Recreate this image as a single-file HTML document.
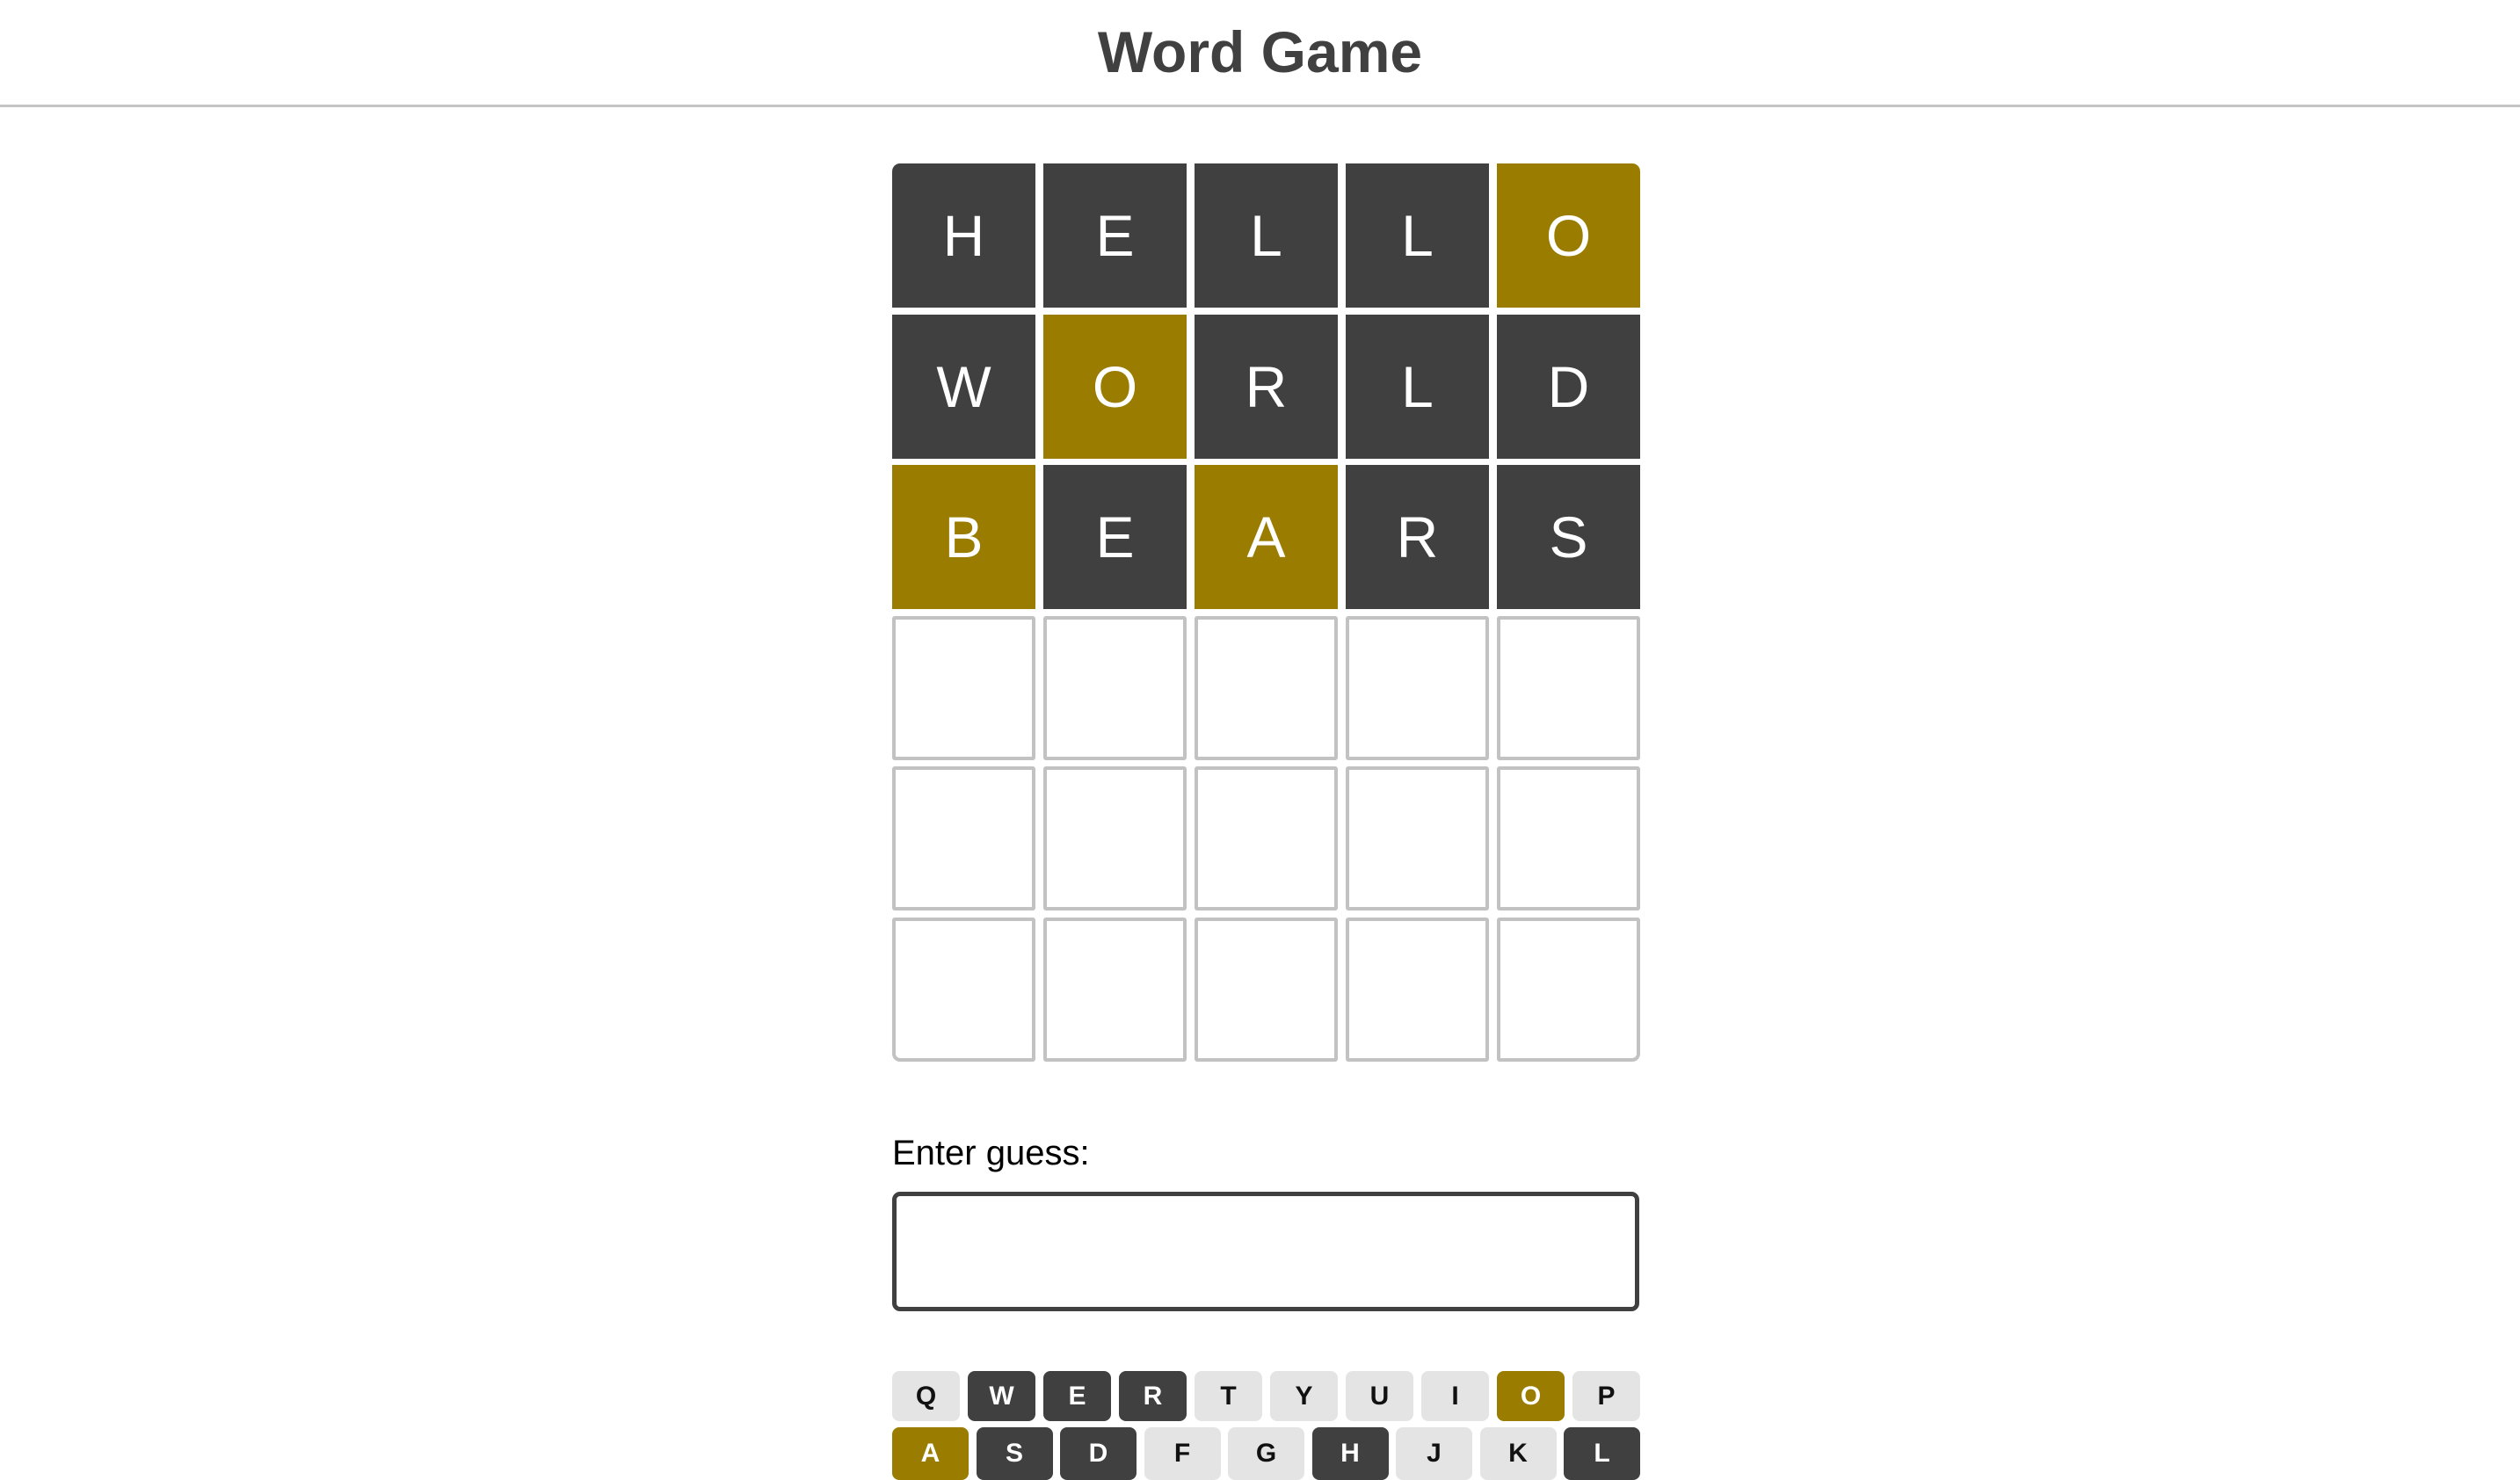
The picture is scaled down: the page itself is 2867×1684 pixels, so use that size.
<!DOCTYPE html>
<html><head><meta charset="utf-8"><style>
*{box-sizing:border-box;margin:0;padding:0}
body{width:2867px;height:1670px;overflow:hidden;background:#fff;font-family:"Liberation Sans",sans-serif;position:relative}
.hdr{position:absolute;left:0;top:0;width:2867px;height:122px;border-bottom:3px solid #c4c4c4;text-align:center}
.hdr h1{font-size:66px;font-weight:bold;color:#404040;line-height:118px}
.grid{position:absolute;left:1015px;top:186px;width:851px}
.row{display:flex;gap:9px;margin-bottom:7.5px}
.t{width:163px;height:164px;display:flex;align-items:center;justify-content:center;font-size:66px;color:#fff}
.d{background:#404040}.y{background:#9a7d00}
.e{border:4px solid #c2c2c2;border-radius:3px}
.lbl{position:absolute;left:1015px;top:1290px;font-size:40px;color:#000}
.inp{position:absolute;left:1015px;top:1356px;width:850px;height:136px;border:5px solid #404040;border-radius:9px}
.kr{position:absolute;left:1015px;display:flex}
.k{height:57px;border-radius:8px;display:flex;align-items:center;justify-content:center;font-size:30px;font-weight:bold;color:#111;background:#e4e4e4}
.k.d{background:#404040;color:#fff}.k.y{background:#9a7d00;color:#fff}
</style></head><body>
<div class="hdr"><h1>Word Game</h1></div>
<div class="grid">
<div class="row"><div class="t d" style="border-top-left-radius:9px">H</div><div class="t d">E</div><div class="t d">L</div><div class="t d">L</div><div class="t y" style="border-top-right-radius:9px">O</div></div>
<div class="row"><div class="t d">W</div><div class="t y">O</div><div class="t d">R</div><div class="t d">L</div><div class="t d">D</div></div>
<div class="row"><div class="t y">B</div><div class="t d">E</div><div class="t y">A</div><div class="t d">R</div><div class="t d">S</div></div>
<div class="row"><div class="t e"></div><div class="t e"></div><div class="t e"></div><div class="t e"></div><div class="t e"></div></div>
<div class="row"><div class="t e"></div><div class="t e"></div><div class="t e"></div><div class="t e"></div><div class="t e"></div></div>
<div class="row"><div class="t e" style="border-bottom-left-radius:9px"></div><div class="t e"></div><div class="t e"></div><div class="t e"></div><div class="t e" style="border-bottom-right-radius:9px"></div></div>
</div>
<div class="lbl">Enter guess:</div>
<div class="inp"></div>
<div class="kr" style="top:1560px;gap:9px">
<div class="k" style="width:77px">Q</div><div class="k d" style="width:77px">W</div><div class="k d" style="width:77px">E</div><div class="k d" style="width:77px">R</div><div class="k" style="width:77px">T</div><div class="k" style="width:77px">Y</div><div class="k" style="width:77px">U</div><div class="k" style="width:77px">I</div><div class="k y" style="width:77px">O</div><div class="k" style="width:77px">P</div>
</div>
<div class="kr" style="top:1624px;gap:8.5px">
<div class="k y" style="width:87px;height:60px">A</div><div class="k d" style="width:87px;height:60px">S</div><div class="k d" style="width:87px;height:60px">D</div><div class="k" style="width:87px;height:60px">F</div><div class="k" style="width:87px;height:60px">G</div><div class="k d" style="width:87px;height:60px">H</div><div class="k" style="width:87px;height:60px">J</div><div class="k" style="width:87px;height:60px">K</div><div class="k d" style="width:87px;height:60px">L</div>
</div>
</body></html>
